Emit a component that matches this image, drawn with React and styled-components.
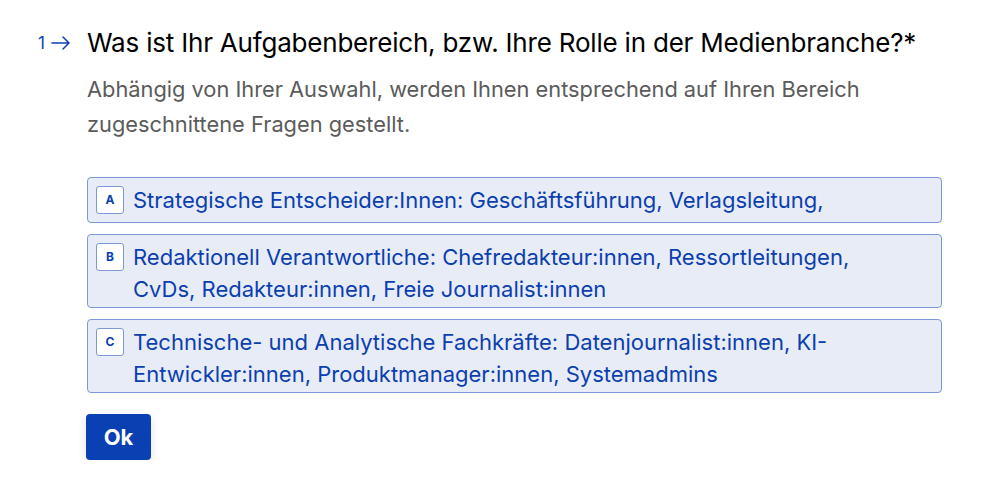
import React from "react";
import styled, { createGlobalStyle } from "styled-components";

const Global = createGlobalStyle`
  html, body {
    margin: 0;
    padding: 0;
    background: #ffffff;
  }
  body {
    font-family: Inter, "Noto Sans", "Liberation Sans", sans-serif;
    -webkit-font-smoothing: antialiased;
  }
`;

const Page = styled.div`
  display: flex;
  padding: 26px 0 0 38px;
`;

const Counter = styled.div`
  width: 49px;
  flex: none;
  display: flex;
  align-items: center;
  gap: 5px;
  height: 34px;
  color: #0b40b4;
  font-size: 17px;
  line-height: 34px;
`;

const Arrow = styled.svg`
  width: 22px;
  height: 18px;
`;

const Body = styled.div`
  width: 855px;
  display: flex;
  flex-direction: column;
`;

const Title = styled.h1`
  margin: 0;
  font-size: 26px;
  font-weight: 400;
  line-height: 34px;
  color: #000000;
  letter-spacing: -0.2px;
`;

const Desc = styled.p`
  margin: 12px 0 0;
  font-size: 21.8px;
  line-height: 35px;
  color: #5b5b5b;
  max-width: 800px;
`;

const Options = styled.div`
  margin-top: 35px;
  display: flex;
  flex-direction: column;
  gap: 11px;
`;

const Option = styled.div`
  display: flex;
  align-items: flex-start;
  gap: 9px;
  padding: 4px 60px 4px 8px;
  background: #e8ecf7;
  border: 1px solid #7d98d6;
  border-radius: 4px;
  color: #0b3fb0;
  font-size: 22px;
  line-height: 32px;
`;

const Key = styled.span`
  flex: none;
  width: 28px;
  height: 28px;
  margin: 4px 0;
  box-sizing: border-box;
  display: flex;
  align-items: center;
  justify-content: center;
  background: #ffffff;
  border: 1px solid #7d98d6;
  border-radius: 3px;
  font-size: 12px;
  font-weight: 700;
  line-height: 1;
`;

const Label = styled.span`
  flex: 1;
  margin: 2px 0 -2px;
`;

const OkButton = styled.button`
  align-self: flex-start;
  margin-top: 21px;
  margin-left: -1px;
  width: 65px;
  height: 46px;
  border: none;
  border-radius: 4px;
  background: #0a40b2;
  color: #ffffff;
  font-family: inherit;
  font-size: 22px;
  font-weight: 700;
  box-shadow: 0 3px 10px rgba(0, 0, 0, 0.12);
  cursor: pointer;
`;

const options = [
  { key: "A", text: "Strategische Entscheider:Innen: Geschäftsführung, Verlagsleitung," },
  { key: "B", text: "Redaktionell Verantwortliche: Chefredakteur:innen, Ressortleitungen, CvDs, Redakteur:innen, Freie Journalist:innen" },
  { key: "C", text: "Technische- und Analytische Fachkräfte: Datenjournalist:innen, KI-Entwickler:innen, Produktmanager:innen, Systemadmins" },
];

export default function App() {
  return (
    <>
      <Global />
      <Page>
        <Counter>
          1
          <Arrow viewBox="0 0 22 18" fill="none" stroke="currentColor" strokeWidth="1.5" strokeLinecap="round" strokeLinejoin="round">
            <path d="M2 9h17M13 3l6 6-6 6" />
          </Arrow>
        </Counter>
        <Body>
          <Title>Was ist Ihr Aufgabenbereich, bzw. Ihre Rolle in der Medienbranche?*</Title>
          <Desc>
            Abhängig von Ihrer Auswahl, werden Ihnen entsprechend auf Ihren Bereich zugeschnittene Fragen gestellt.
          </Desc>
          <Options>
            {options.map((o) => (
              <Option key={o.key}>
                <Key>{o.key}</Key>
                <Label>{o.text}</Label>
              </Option>
            ))}
          </Options>
          <OkButton>Ok</OkButton>
        </Body>
      </Page>
    </>
  );
}
